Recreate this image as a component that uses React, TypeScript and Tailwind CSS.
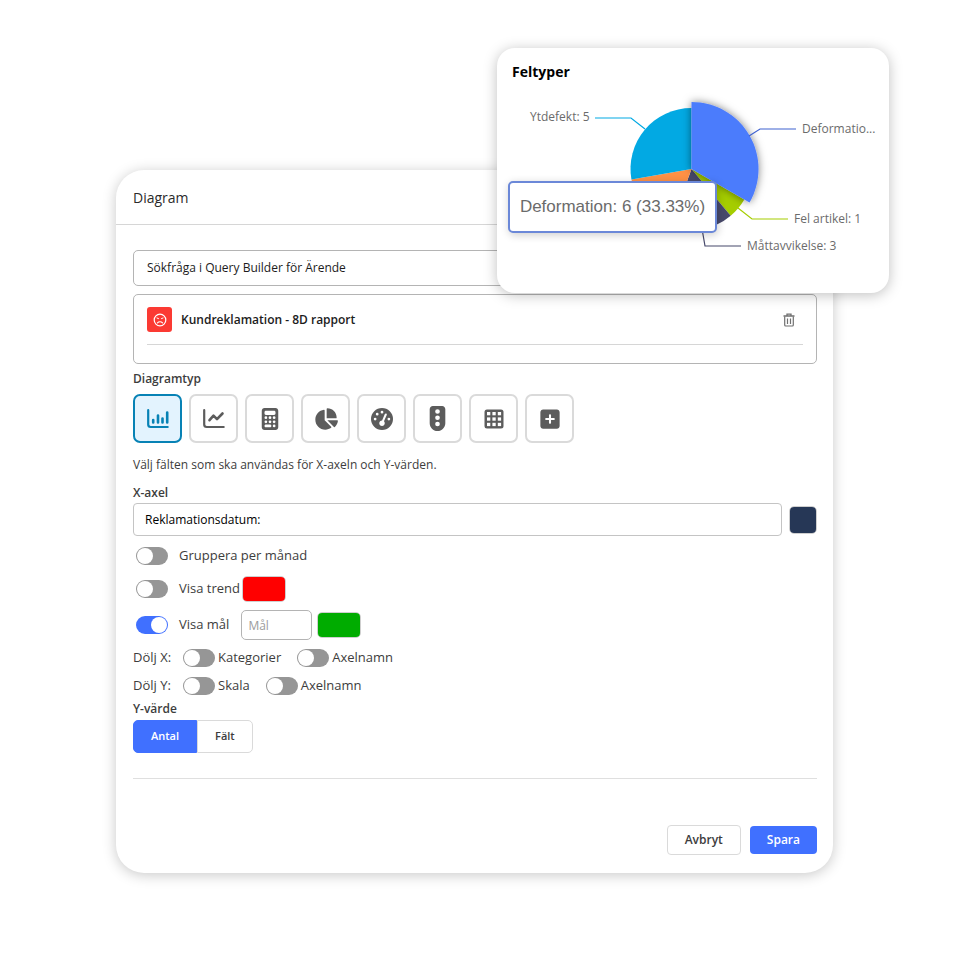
import { useState } from "react";
import type { ReactNode } from "react";
import { FaCalculator, FaChartPie, FaGaugeHigh, FaSquarePlus, FaTrafficLight } from "react-icons/fa6";

const slices = [
  { name: "Fel artikel", value: 1, start: 6, color: "#a5cd00" },
  { name: "Måttavvikelse", value: 3, start: 7, color: "#47496b" },
  { name: "Okänd", value: 3, start: 10, color: "#ff9145" },
  { name: "Ytdefekt", value: 5, start: 13, color: "#02a9e3" },
];

const labels = [
  { text: "Ytdefekt: 5", x: 33, y: 73, line: "98,70 134,70 148,81", color: "#02a9e3" },
  { text: "Deformatio...", x: 305, y: 85, line: "252,88 263,81 299,81", color: "#3f62d0" },
  { text: "Fel artikel: 1", x: 297, y: 175, line: "241,160 255,171 291,171", color: "#a5cd00" },
  { text: "Måttavvikelse: 3", x: 250, y: 202, line: "204,175 208,198 244,198", color: "#47496b" },
];

function sector(start: number, value: number, r: number) {
  const cx = 194.5;
  const cy = 121;
  const point = (n: number) => {
    const a = (n / 18) * Math.PI * 2 - Math.PI / 2;
    return `${cx + r * Math.cos(a)} ${cy + r * Math.sin(a)}`;
  };
  return `M${cx} ${cy}L${point(start)}A${r} ${r} 0 0 1 ${point(start + value)}Z`;
}

function PieCard() {
  return (
    <section className="absolute -top-[122px] -right-[56px] h-[245px] w-[392px] rounded-[18px] bg-white shadow-[0_2px_14px_rgba(0,0,0,0.25)]">
      <h2 className="absolute top-[14px] left-[15px] text-[14px] leading-[20px] font-bold text-black">Feltyper</h2>
      <svg viewBox="0 0 392 245" className="h-full w-full">
        <defs>
          <filter id="lift" x="-20%" y="-20%" width="140%" height="140%">
            <feDropShadow dx="0" dy="0" stdDeviation="4" floodColor="#000" floodOpacity="0.5" />
          </filter>
        </defs>
        {slices.map((s) => (
          <path key={s.name} d={sector(s.start, s.value, 61)} fill={s.color} />
        ))}
        <path d={sector(0, 6, 67)} fill="#4c7bfc" filter="url(#lift)" />
        {labels.map((l) => (
          <g key={l.text}>
            <polyline points={l.line} fill="none" stroke={l.color} strokeWidth="1.2" />
            <text x={l.x} y={l.y} fontSize="12" fill="#6b6b6b">
              {l.text}
            </text>
          </g>
        ))}
      </svg>
      <div
        role="tooltip"
        className="absolute top-[133px] left-[11px] flex h-[52px] w-[209px] items-center justify-center rounded-[5px] border-2 border-[#6b88d8] bg-white font-['Liberation_Sans',sans-serif] text-[17px] whitespace-nowrap text-[#6b6b6b] shadow-[1px_2px_8px_rgba(0,0,0,0.2)]"
      >
        Deformation: 6 (33.33%)
      </div>
    </section>
  );
}

function BarIcon() {
  return (
    <svg viewBox="0 0 22 20" className="h-5 w-[22px]" fill="none" stroke="currentColor" strokeLinecap="round">
      <path d="M1.200 1.200v14.300a2.500 2.500 0 0 0 2.500 2.500h17" strokeWidth="2.200" />
      <path d="M6.200 11v2.500M11 6.500v7M15.500 9.500v4M20.200 3.500v10" strokeWidth="2.600" />
    </svg>
  );
}

function LineIcon() {
  return (
    <svg viewBox="0 0 22 20" className="h-5 w-[22px]" fill="none" stroke="currentColor" strokeLinecap="round" strokeLinejoin="round">
      <path d="M1.200 1.200v14.300a2.500 2.500 0 0 0 2.500 2.500h17" strokeWidth="2.200" />
      <path d="M6.500 11.200l4-4.500 3.500 3.500 5.500-5.700" strokeWidth="2.600" />
    </svg>
  );
}

function GridIcon() {
  return (
    <svg viewBox="0 0 20 20" className="h-5 w-5">
      <rect x="0.500" y="0.500" width="19" height="19" rx="2.500" fill="currentColor" />
      {[3, 8.4, 13.8].map((y) => [3, 8.4, 13.8].map((x) => <rect key={`${x}-${y}`} x={x} y={y} width="3.300" height="3.300" fill="#fff" />))}
    </svg>
  );
}

const chartTypes: { id: string; label: string; icon: ReactNode }[] = [
  { id: "bar", label: "Stapeldiagram", icon: <BarIcon /> },
  { id: "line", label: "Linjediagram", icon: <LineIcon /> },
  { id: "number", label: "Siffra", icon: <FaCalculator size={22} /> },
  { id: "pie", label: "Cirkeldiagram", icon: <FaChartPie size={24} /> },
  { id: "gauge", label: "Mätare", icon: <FaGaugeHigh size={22} /> },
  { id: "light", label: "Trafikljus", icon: <FaTrafficLight size={25} /> },
  { id: "grid", label: "Tabell", icon: <GridIcon /> },
  { id: "add", label: "Lägg till", icon: <FaSquarePlus size={22} /> },
];

function Switch({ id, checked = false }: { id: string; checked?: boolean }) {
  return (
    <input
      id={id}
      type="checkbox"
      defaultChecked={checked}
      className="relative h-[18px] w-8 shrink-0 appearance-none rounded-full bg-[#969696] before:absolute before:top-px before:left-px before:h-4 before:w-4 before:rounded-full before:bg-white checked:bg-[#4070ff] checked:before:left-[15px]"
    />
  );
}

function ColorInput({ label, value, className }: { label: string; value: string; className: string }) {
  return (
    <input
      type="color"
      aria-label={label}
      defaultValue={value}
      className={`shrink-0 appearance-none overflow-hidden rounded-[5px] border border-[#cfcfcf] bg-transparent p-0 [&::-webkit-color-swatch]:border-0 [&::-webkit-color-swatch-wrapper]:p-0 ${className}`}
    />
  );
}

export default function App() {
  const [type, setType] = useState("bar");
  const [mode, setMode] = useState("Antal");

  return (
    <main className="min-h-screen bg-white pt-[170px] pr-[127px] pb-[87px] pl-[116px] font-['Open_Sans',sans-serif] text-[#3d3d3d]">
      <div className="relative rounded-[28px] bg-white shadow-[0_2px_14px_rgba(0,0,0,0.22)]">
        <header className="flex h-[55px] items-center border-b border-[#d6d6d6] px-[17px]">
          <h1 className="text-[14px] text-[#2b2b2b]">Diagram</h1>
        </header>

        <form className="flex flex-col pt-[25px] pr-4 pb-[18px] pl-[17px] text-[12px]" onSubmit={(e) => e.preventDefault()}>
          <select aria-label="Datakälla" className="h-9 w-full appearance-none rounded-[5px] border border-[#b4b4b4] px-[13px] text-[#1c1c1c]">
            <option>Sökfråga i Query Builder för Ärende</option>
          </select>

          <div className="mt-2 h-[70px] rounded-[5px] border border-[#b4b4b4] px-[13px]">
            <div className="flex h-[50px] items-center border-b border-[#d6d6d6]">
              <span className="flex h-[25px] w-[25px] items-center justify-center rounded-[3px] bg-[#fb3a33]">
                <svg viewBox="0 0 14 14" className="h-[14px] w-[14px]" fill="none" stroke="#fff" strokeLinecap="round">
                  <circle cx="7" cy="7" r="5.800" strokeWidth="1.200" />
                  <path d="M4.500 9.800c1.200-1.400 3.800-1.400 5 0" strokeWidth="1.200" />
                  <path d="M4 5l1.500.6M10 5l-1.500.6" />
                </svg>
              </span>
              <strong className="ml-[9px] font-semibold text-[#1c1c1c]">Kundreklamation - 8D rapport</strong>
              <button type="button" aria-label="Ta bort" className="mr-2 ml-auto text-[#707070]">
                <svg viewBox="0 0 12 14" className="h-[14px] w-3" fill="none" stroke="currentColor">
                  <path d="M.5 3h11M4 2.500V1.200h4v1.300" strokeWidth="1.300" />
                  <path d="M1.700 3.500v8.500a1 1 0 0 0 1 1h6.600a1 1 0 0 0 1-1V3.500M4.500 5.500v5.500M7.500 5.500v5.500" strokeWidth="1.200" />
                </svg>
              </button>
            </div>
          </div>

          <h2 className="mt-[6px] leading-[18px] font-semibold">Diagramtyp</h2>
          <div className="mt-[6px] flex gap-[7px]">
            {chartTypes.map((t) => (
              <button
                key={t.id}
                type="button"
                aria-label={t.label}
                aria-pressed={type === t.id}
                onClick={() => setType(t.id)}
                className={`flex h-[49px] w-[49px] items-center justify-center rounded-[7px] border-2 ${
                  type === t.id ? "border-[#0782b5] bg-[#e3f3fe] text-[#0782b5]" : "border-[#dadada] text-[#5c5c5c]"
                }`}
              >
                {t.icon}
              </button>
            ))}
          </div>

          <p className="mt-[13px] leading-[18px]">Välj fälten som ska användas för X-axeln och Y-värden.</p>

          <label htmlFor="x-axis" className="mt-[10px] leading-[18px] font-semibold">
            X-axel
          </label>
          <div className="mt-px flex items-center gap-[7px]">
            <select id="x-axis" className="h-[33px] min-w-0 flex-1 appearance-none rounded-[4px] border border-[#c4c4c4] px-[11px] text-black">
              <option>Reklamationsdatum:</option>
            </select>
            <ColorInput label="Färg X-axel" value="#263756" className="h-7 w-7" />
          </div>

          <div className="text-[13px]">
            <div className="mt-[10px] flex h-5 items-center pl-[3px]">
              <Switch id="group" />
              <label htmlFor="group" className="ml-[11px]">Gruppera per månad</label>
            </div>
            <div className="mt-[10px] flex h-[26px] items-center pl-[3px]">
              <Switch id="trend" />
              <label htmlFor="trend" className="mr-0.5 ml-[11px]">Visa trend</label>
              <ColorInput label="Färg trend" value="#ff0000" className="h-[26px] w-11" />
            </div>
            <div className="mt-2 flex h-[30px] items-center pl-[3px]">
              <Switch id="goal" checked />
              <label htmlFor="goal" className="mr-3 ml-[11px]">Visa mål</label>
              <input aria-label="Mål" placeholder="Mål" className="mr-[5px] h-[30px] w-[71px] rounded-[5px] border border-[#b4b4b4] px-[6px] text-[12px] placeholder:text-[#9c9c9c]" />
              <ColorInput label="Färg mål" value="#00ac00" className="h-[26px] w-11" />
            </div>
            <div className="mt-2 flex h-5 items-center">
              <span className="w-[50px]">Dölj X:</span>
              <Switch id="hide-x-cat" />
              <label htmlFor="hide-x-cat" className="mr-4 ml-[3px]">Kategorier</label>
              <Switch id="hide-x-name" />
              <label htmlFor="hide-x-name" className="ml-[3px]">Axelnamn</label>
            </div>
            <div className="mt-2 flex h-5 items-center">
              <span className="w-[50px]">Dölj Y:</span>
              <Switch id="hide-y-scale" />
              <label htmlFor="hide-y-scale" className="mr-4 ml-[3px]">Skala</label>
              <Switch id="hide-y-name" />
              <label htmlFor="hide-y-name" className="ml-[3px]">Axelnamn</label>
            </div>
          </div>

          <h2 className="mt-[4px] leading-[18px] font-semibold">Y-värde</h2>
          <div className="mt-[2px] flex h-[33px] text-[11px] font-semibold">
            {["Antal", "Fält"].map((m) => (
              <button
                key={m}
                type="button"
                onClick={() => setMode(m)}
                className={`border px-[17px] first:rounded-l-[5px] last:rounded-r-[5px] ${
                  mode === m ? "border-[#4070ff] bg-[#4070ff] text-white" : "border-[#dadada]"
                }`}
              >
                {m}
              </button>
            ))}
          </div>

          <hr className="mt-[25px] border-[#dfdfdf]" />

          <footer className="mt-[46px] flex items-center justify-end gap-[9px] font-semibold">
            <button type="button" className="h-[30px] rounded-[4px] border border-[#dadada] px-[17px]">
              Avbryt
            </button>
            <button type="submit" className="h-7 rounded-[4px] bg-[#4070ff] px-[17px] text-white">
              Spara
            </button>
          </footer>
        </form>

        <PieCard />
      </div>
    </main>
  );
}
